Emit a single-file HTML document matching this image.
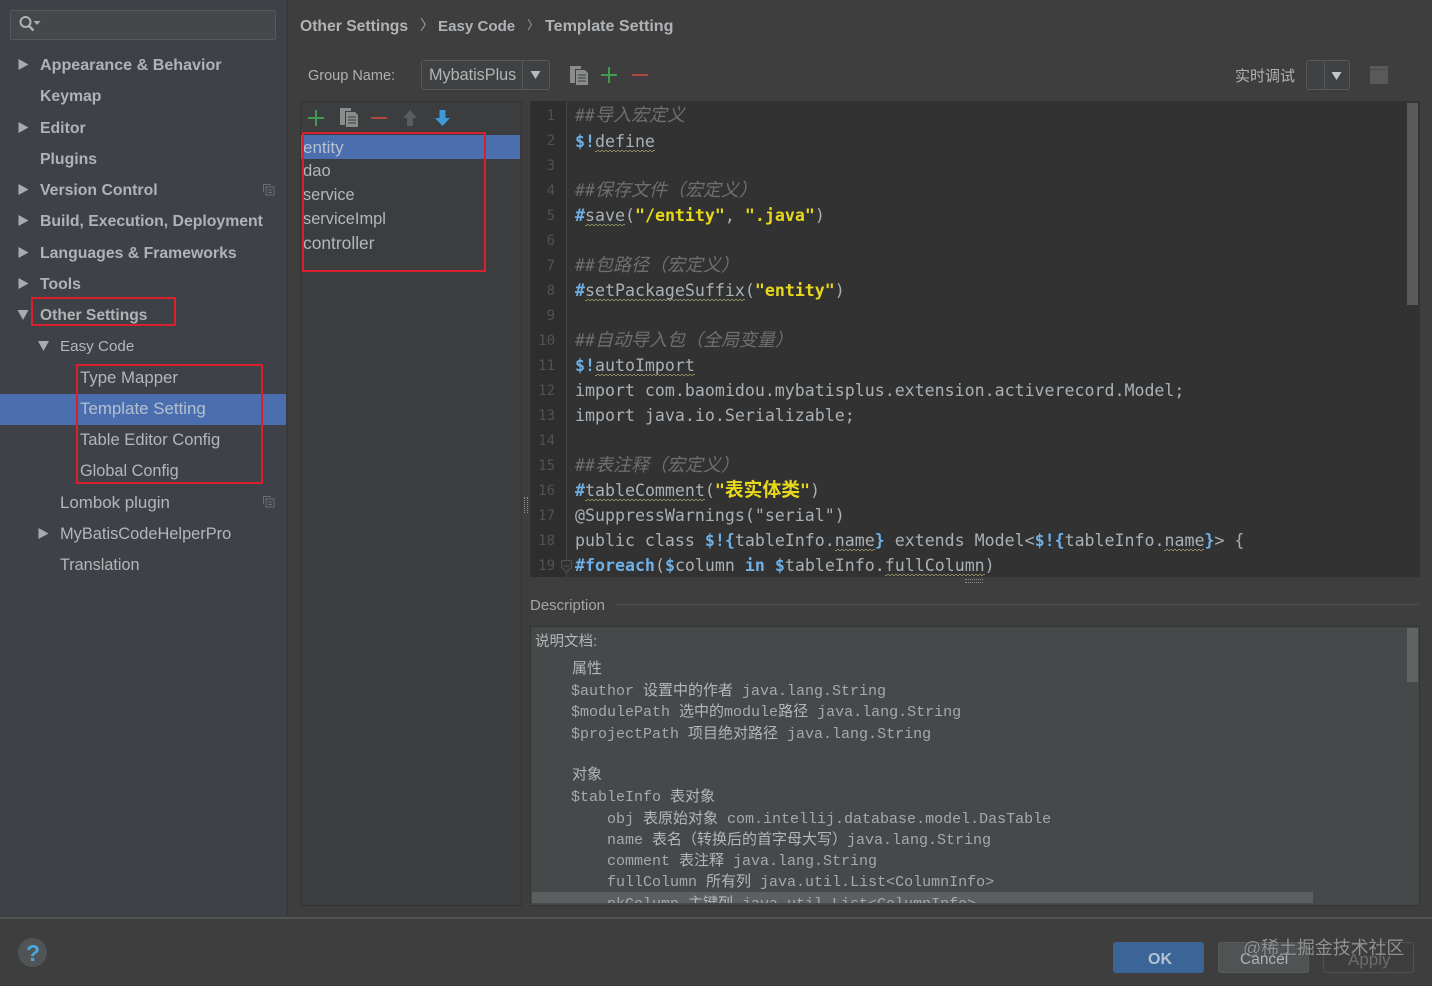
<!DOCTYPE html>
<html><head><meta charset="utf-8"><style>
html,body{margin:0;padding:0;width:1432px;height:986px;overflow:hidden;background:#3e3e3e}
body{position:relative;font-family:"Liberation Sans","Noto Sans CJK SC",sans-serif}
.b{position:absolute;box-sizing:border-box}
.t{position:absolute;white-space:pre;line-height:24px;margin-top:-10px}
.s{font-size:16px;color:#b4b6b8}
.h{font-weight:bold;font-size:15.8px;color:#b0b3b6}
.c{font-family:"DejaVu Sans Mono","Noto Sans CJK SC",monospace;font-size:16.6px;color:#a9b1b6;left:575px;margin-top:-12px}
.n{font-family:"DejaVu Sans Mono",monospace;font-size:14px;color:#505253;text-align:right;width:24px;left:531px;margin-top:-12px}
.g{font-style:italic;color:#6d6f70;font-family:"Noto Sans CJK SC","DejaVu Sans Mono",monospace;font-size:18px}
.g i{font-family:"DejaVu Sans Mono",monospace;font-size:16.6px}
.k{color:#6fb0e6;font-weight:bold}
.y{color:#e8d81c;font-weight:bold}
.y u{text-decoration:none;font-size:18.8px;line-height:16px}
.w{background:repeating-linear-gradient(90deg,#8f8f62 0 2px,transparent 2px 4px) 0 100%/100% 1px no-repeat,repeating-linear-gradient(90deg,transparent 0 2px,#8f8f62 2px 4px) 0 calc(100% - 1px)/100% 1px no-repeat;padding-bottom:1px}
.d{font-family:"Liberation Mono","Noto Sans CJK SC",monospace;font-size:15px;color:#a6a9aa;margin-top:-12px}
.d b{font-family:"Noto Sans CJK SC",sans-serif;font-weight:normal;color:#b4b6b7;font-size:15px}
.r{position:absolute;box-sizing:border-box;border:2px solid #d8202f}
svg{position:absolute;overflow:visible}
</style></head><body>

<!-- sidebar -->
<div class="b" style="left:0;top:0;width:286px;height:917px;background:#3e4147"></div>
<div class="b" style="left:286px;top:0;width:2px;height:917px;background:#38393b"></div>
<div class="b" style="left:10px;top:10px;width:266px;height:30px;background:#45484a;border:1px solid #56595b;border-radius:2px"></div>
<svg style="left:18px;top:15px" width="24" height="20"><circle cx="7.5" cy="7" r="5" fill="none" stroke="#b0b2b4" stroke-width="2"/><path d="M11 11L15.5 15.500" stroke="#b0b2b4" stroke-width="2.4"/><path d="M15.500 6h7l-3.500 4z" fill="#a8aaac"/></svg>

<div class="b" style="left:0;top:394px;width:286px;height:31px;background:#4b6eaf"></div>

<svg style="left:0;top:0" width="60" height="360">
<g fill="#a9acae"><path d="M18.500 59l10 5.500-10 5.500zM18.500 122l10 5.500-10 5.500zM18.500 184l10 5.500-10 5.500zM18.500 215l10 5.500-10 5.500zM18.500 247l10 5.500-10 5.500zM18.500 278l10 5.500-10 5.500z"/><path d="M17.500 310h11l-5.500 10z"/><path d="M38 341h11l-5.500 10z"/></g>
</svg>
<svg style="left:38px;top:528px" width="12" height="12"><path d="M.5 0l10 5.500-10 5.500z" fill="#a9acae"/></svg>

<span class="t h" style="left:40px;top:63px;font-size:16.1px">Appearance &amp; Behavior</span>
<span class="t h" style="left:40px;top:95px">Keymap</span>
<span class="t h" style="left:40px;top:127px">Editor</span>
<span class="t h" style="left:40px;top:158px">Plugins</span>
<span class="t h" style="left:40px;top:189px">Version Control</span>
<span class="t h" style="left:40px;top:220px">Build, Execution, Deployment</span>
<span class="t h" style="left:40px;top:252px">Languages &amp; Frameworks</span>
<span class="t h" style="left:40px;top:283px">Tools</span>
<span class="t h" style="left:40px;top:314px;font-size:15.6px">Other Settings</span>
<span class="t s" style="left:60px;top:345px;font-size:15.2px">Easy Code</span>
<span class="t s" style="left:80px;top:376px;font-size:16.8px">Type Mapper</span>
<span class="t s" style="left:80px;top:407px;font-size:16.9px;color:#b5c0d0">Template Setting</span>
<span class="t s" style="left:80px;top:438px;font-size:16.6px">Table Editor Config</span>
<span class="t s" style="left:80px;top:469px;font-size:16.3px">Global Config</span>
<span class="t s" style="left:60px;top:501px;font-size:16.9px">Lombok plugin</span>
<span class="t s" style="left:60px;top:532px;font-size:16.4px">MyBatisCodeHelperPro</span>
<span class="t s" style="left:60px;top:563px;font-size:16.2px">Translation</span>

<svg style="left:263px;top:184px" width="12" height="12"><path d="M.5 8V.5H8M3 3h8v8H3zM5 6h4M5 8.500h4" fill="none" stroke="#6a6d70"/></svg>
<svg style="left:263px;top:496px" width="12" height="12"><path d="M.5 8V.5H8M3 3h8v8H3zM5 6h4M5 8.500h4" fill="none" stroke="#6a6d70"/></svg>

<div class="r" style="left:31px;top:297px;width:145px;height:29px"></div>
<div class="r" style="left:76px;top:364px;width:187px;height:120px"></div>

<!-- breadcrumb -->
<span class="t h" style="left:300px;top:25px;font-size:15.7px">Other Settings</span>
<span class="t" style="left:420px;top:23px;font-size:14px;color:#a0a2a4">〉</span>
<span class="t h" style="left:438px;top:25px;font-size:15.1px">Easy Code</span>
<span class="t" style="left:527px;top:23px;font-size:12px;color:#a0a2a4">〉</span>
<span class="t h" style="left:545px;top:24px;font-size:16.1px">Template Setting</span>

<!-- group row -->
<span class="t" style="left:308px;top:74px;font-size:14.5px;color:#aeb0b1">Group Name:</span>
<div class="b" style="left:421px;top:60px;width:129px;height:30px;border:1px solid #565859;border-radius:3px;background:#3f4142"></div>
<div class="b" style="left:522px;top:60px;width:1px;height:30px;background:#565859"></div>
<span class="t s" style="left:429px;top:73px;font-size:16.2px;color:#b2b4b5">MybatisPlus</span>
<svg style="left:530px;top:71px" width="12" height="9"><path d="M.5 0h10l-5 8z" fill="#b6b8b9"/></svg>

<svg style="left:570px;top:66px" width="20" height="20"><path d="M0 0h11v3H5v14H0z" fill="#8a8d8e"/><path d="M6 4h9l3 3v12H6z" fill="#8a8d8e"/><path d="M8 9h8M8 12h8M8 15h8" stroke="#3e3e3e"/></svg>
<svg style="left:601px;top:67px" width="16" height="16"><path d="M8 0v16M0 8h16" stroke="#3f9c50" stroke-width="2"/></svg>
<svg style="left:632px;top:74px" width="16" height="2"><path d="M0 1h16" stroke="#b0483f" stroke-width="2"/></svg>

<span class="t" style="left:1235px;top:75px;font-size:15px;color:#b0b2b3">实时调试</span>
<div class="b" style="left:1306px;top:60px;width:44px;height:30px;border:1px solid #565859;border-radius:3px;background:#3f4142"></div>
<div class="b" style="left:1324px;top:60px;width:1px;height:30px;background:#565859"></div>
<svg style="left:1331px;top:72px" width="12" height="9"><path d="M.5 0h10l-5 8z" fill="#c4c6c7"/></svg>
<div class="b" style="left:1370px;top:66px;width:18px;height:18px;background:#58595a"></div>
<div class="b" style="left:1370px;top:69px;width:18px;height:1px;background:#4a4b4c"></div>

<!-- list panel -->
<div class="b" style="left:300px;top:101px;width:222px;height:805px;background:#3c3d3e;border:1px solid #333435"></div>
<div class="b" style="left:301px;top:135px;width:219px;height:24px;background:#4b6eaf"></div>
<svg style="left:308px;top:110px" width="16" height="16"><path d="M8 0v16M0 8h16" stroke="#3f9c50" stroke-width="2"/></svg>
<svg style="left:340px;top:108px" width="19" height="20"><path d="M0 0h11v3H5v14H0z" fill="#8a8d8e"/><path d="M6 4h9l3 3v12H6z" fill="#8a8d8e"/><path d="M8 9h8M8 12h8M8 15h8" stroke="#3e3e3e"/></svg>
<svg style="left:371px;top:117px" width="16" height="2"><path d="M0 1h16" stroke="#b0483f" stroke-width="2"/></svg>
<svg style="left:403px;top:110px" width="14" height="16"><path d="M7 0l7 8H10v8H4V8H0z" fill="#5a5c5d"/></svg>
<svg style="left:435px;top:110px" width="15" height="16"><path d="M4.500 0h6v8H15l-7.500 8L0 8h4.500z" fill="#3d9ad6"/></svg>

<span class="t s" style="left:303px;top:146px;font-size:17px;color:#b6c0d0">entity</span>
<span class="t s" style="left:303px;top:169px;font-size:16.6px">dao</span>
<span class="t s" style="left:303px;top:193px;font-size:16.3px">service</span>
<span class="t s" style="left:303px;top:217px;font-size:16.4px">serviceImpl</span>
<span class="t s" style="left:303px;top:241px;font-size:17.4px">controller</span>
<div class="r" style="left:302px;top:132px;width:184px;height:140px"></div>

<!-- editor -->
<div class="b" style="left:530px;top:101px;width:890px;height:476px;background:#323232"></div>
<div class="b" style="left:531px;top:101px;width:36px;height:476px;background:#2e2e2e"></div>
<div class="b" style="left:566px;top:101px;width:1px;height:476px;background:#454647"></div>
<div class="b" style="left:1407px;top:103px;width:11px;height:202px;background:#585a5b"></div>

<span class="t n" style="top:116px">1</span>
<span class="t n" style="top:141px">2</span>
<span class="t n" style="top:166px">3</span>
<span class="t n" style="top:191px">4</span>
<span class="t n" style="top:216px">5</span>
<span class="t n" style="top:241px">6</span>
<span class="t n" style="top:266px">7</span>
<span class="t n" style="top:291px">8</span>
<span class="t n" style="top:316px">9</span>
<span class="t n" style="top:341px">10</span>
<span class="t n" style="top:366px">11</span>
<span class="t n" style="top:391px">12</span>
<span class="t n" style="top:416px">13</span>
<span class="t n" style="top:441px">14</span>
<span class="t n" style="top:466px">15</span>
<span class="t n" style="top:491px">16</span>
<span class="t n" style="top:516px">17</span>
<span class="t n" style="top:541px">18</span>
<span class="t n" style="top:566px">19</span>
<svg style="left:561px;top:560px" width="12" height="14"><path d="M.5.500h10v7l-5 5-5-5zM2.500 6h6" fill="#323232" stroke="#4e5051"/></svg>

<span class="t c g" style="top:114px"><i>##</i>导入宏定义</span>
<span class="t c" style="top:142px"><span class="k">$!</span><span class="w">define</span></span>
<span class="t c g" style="top:189px"><i>##</i>保存文件（宏定义）</span>
<span class="t c" style="top:216px"><span class="k">#</span><span class="w">save</span>(<span class="y">"/entity"</span>, <span class="y">".java"</span>)</span>
<span class="t c g" style="top:264px"><i>##</i>包路径（宏定义）</span>
<span class="t c" style="top:291px"><span class="k">#</span><span class="w">setPackageSuffix</span>(<span class="y">"entity"</span>)</span>
<span class="t c g" style="top:339px"><i>##</i>自动导入包（全局变量）</span>
<span class="t c" style="top:366px"><span class="k">$!</span><span class="w">autoImport</span></span>
<span class="t c" style="top:391px">import com.baomidou.mybatisplus.extension.activerecord.Model;</span>
<span class="t c" style="top:416px">import java.io.Serializable;</span>
<span class="t c g" style="top:464px"><i>##</i>表注释（宏定义）</span>
<span class="t c" style="top:491px"><span class="k">#</span><span class="w">tableComment</span>(<span class="y">"<u>表实体类</u>"</span>)</span>
<span class="t c" style="top:516px">@SuppressWarnings("serial")</span>
<span class="t c" style="top:541px">public class <span class="k">$!{</span>tableInfo.<span class="w">name</span><span class="k">}</span> extends Model&lt;<span class="k">$!{</span>tableInfo.<span class="w">name</span><span class="k">}</span>&gt; {</span>
<span class="t c" style="top:566px"><span class="k">#foreach</span>(<span class="k">$</span>column <span class="k">in</span> <span class="k">$</span>tableInfo.<span class="w">fullColumn</span>)</span>

<div class="b" style="left:965px;top:579px;width:18px;height:4px;border-top:1px dotted #8a8c8d;border-bottom:1px dotted #8a8c8d"></div>
<div class="b" style="left:524px;top:497px;width:4px;height:16px;border-left:1px dotted #8a8c8d;border-right:1px dotted #8a8c8d"></div>

<!-- description -->
<span class="t" style="left:530px;top:604px;font-size:15px;color:#a4a6a7">Description</span>
<div class="b" style="left:616px;top:604px;width:802px;height:1px;background:#4f5152"></div>
<div class="b" style="left:530px;top:626px;width:890px;height:280px;background:#45494a;border:1px solid #333435;overflow:hidden">
  <div class="b" style="left:876px;top:1px;width:11px;height:54px;background:#606364"></div>
  <div class="b" style="left:1px;top:265px;width:781px;height:11px;background:#5c5f60"></div>
  <span class="t d" style="left:76px;top:276px">pkColumn <b>主键列</b> java.util.List&lt;ColumnInfo&gt;</span>
  <div class="b" style="left:0;top:276px;width:888px;height:2px;background:#45494a"></div>
</div>
<span class="t" style="left:535px;top:640px;font-size:14.5px;color:#b4b6b7">说明文档:</span>
<span class="t d" style="left:572px;top:668px"><b>属性</b></span>
<span class="t d" style="left:571px;top:690px">$author <b>设置中的作者</b> java.lang.String</span>
<span class="t d" style="left:571px;top:711px">$modulePath <b>选中的</b>module<b>路径</b> java.lang.String</span>
<span class="t d" style="left:571px;top:733px">$projectPath <b>项目绝对路径</b> java.lang.String</span>
<span class="t d" style="left:572px;top:774px"><b>对象</b></span>
<span class="t d" style="left:571px;top:796px">$tableInfo <b>表对象</b></span>
<span class="t d" style="left:607px;top:818px">obj <b>表原始对象</b> com.intellij.database.model.DasTable</span>
<span class="t d" style="left:607px;top:839px">name <b>表名（转换后的首字母大写）</b>java.lang.String</span>
<span class="t d" style="left:607px;top:860px">comment <b>表注释</b> java.lang.String</span>
<span class="t d" style="left:607px;top:881px">fullColumn <b>所有列</b> java.util.List&lt;ColumnInfo&gt;</span>

<!-- bottom -->
<div class="b" style="left:0;top:917px;width:1432px;height:2px;background:#515354"></div>
<div class="b" style="left:18px;top:938px;width:29px;height:29px;border-radius:50%;background:#505456"></div>
<span class="t" style="left:26px;top:951px;font-size:23px;font-weight:bold;color:#4ea6dc">?</span>

<div class="b" style="left:1113px;top:942px;width:91px;height:31px;background:#3a6596;border-radius:3px"></div>
<span class="t" style="left:1148px;top:958px;font-size:16px;font-weight:bold;color:#b3c2d3">OK</span>
<div class="b" style="left:1218px;top:942px;width:91px;height:31px;background:#505354;border:1px solid #585b5c;border-radius:3px"></div>
<span class="t" style="left:1240px;top:958px;font-size:15.5px;color:#b0b3b4">Cancel</span>
<div class="b" style="left:1323px;top:942px;width:91px;height:31px;border:1px solid #4e5051;border-radius:3px"></div>
<span class="t" style="left:1348px;top:958px;font-size:17px;color:#6a6c6d">Apply</span>
<span class="t" style="left:1243px;top:946px;font-size:17.9px;color:rgba(175,178,180,.75);text-shadow:0 0 1px #333">@稀土掘金技术社区</span>

</body></html>
